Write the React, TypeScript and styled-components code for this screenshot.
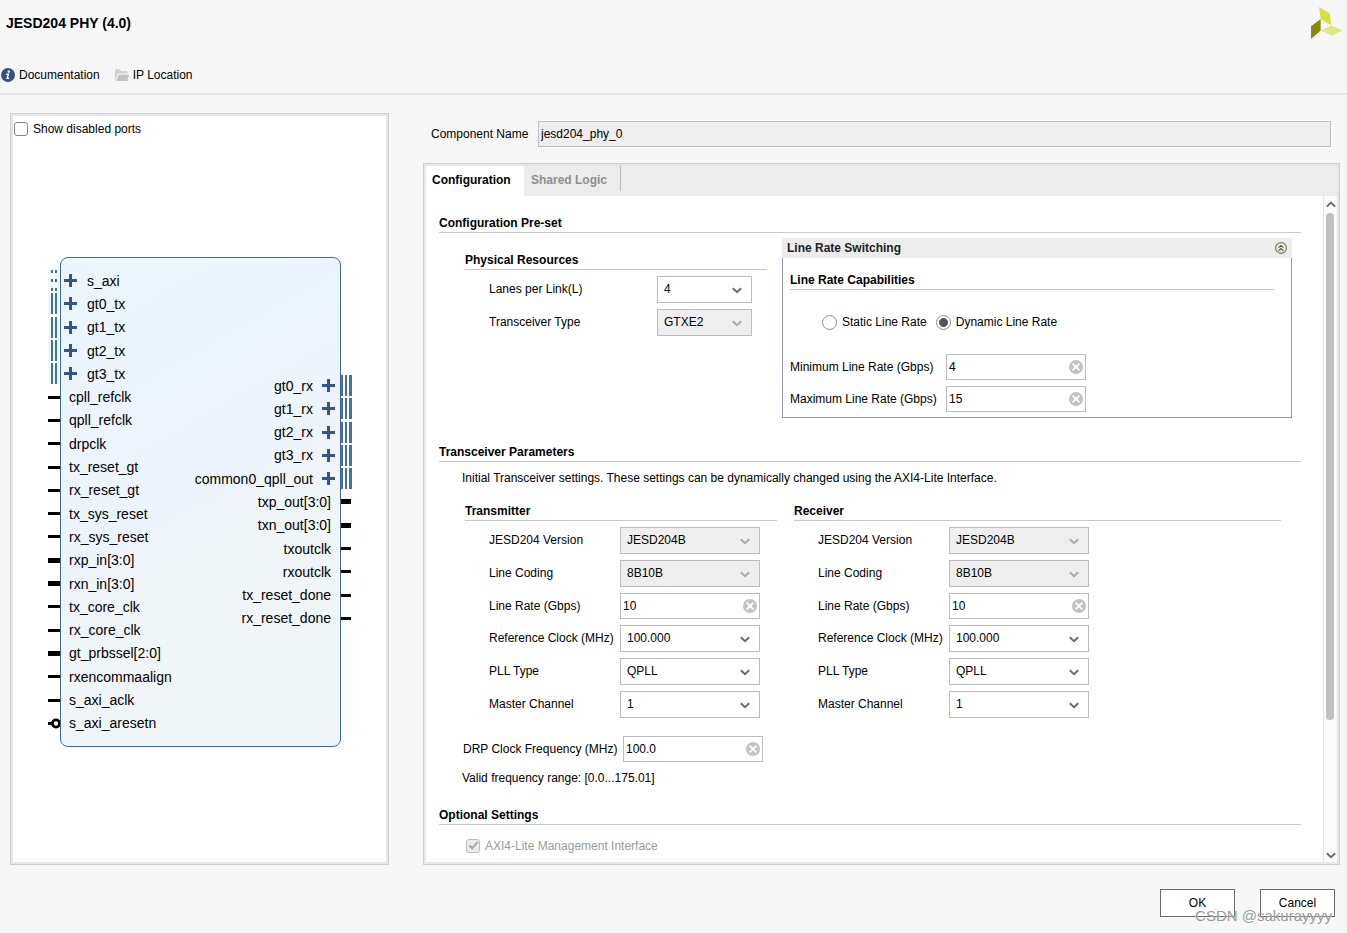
import React, { useId, useState } from "react";
import styled, { createGlobalStyle, css } from "styled-components";

const GlobalStyle = createGlobalStyle`
  *, *::before, *::after { box-sizing: border-box; }
  body {
    margin: 0;
    background: #f7f7f7;
    color: #000;
    font: 12px/16px "Liberation Sans", Arial, sans-serif;
  }
  button, input, select { font: inherit; color: inherit; margin: 0; }
`;

/* ---------- Page frame ---------- */

const Page = styled.div`
  display: flex;
  flex-direction: column;
  min-height: 100vh;
`;

const Header = styled.header`
  display: flex;
  justify-content: space-between;
  align-items: flex-start;
  padding: 7px 4px 10px 1px;
  border-bottom: 2px solid #e6e6e6;
`;

const Title = styled.h1`
  margin: 8px 0 36px 5px;
  font-size: 14px;
  line-height: 16px;
`;

const Links = styled.nav`
  display: flex;
  gap: 15px;
`;

const IconLink = styled.a`
  display: flex;
  align-items: center;
  gap: 4px;
  color: inherit;
  text-decoration: none;
`;

const Main = styled.main`
  flex: 1;
  display: flex;
  gap: 34px;
  padding: 18px 7px 0 10px;
`;

const framed = css`
  border: 1px solid #cfcfcf;
  box-shadow: inset 0 0 0 2px #e7e7e7;
  padding: 2px;
`;

const SymbolPanel = styled.section`
  ${framed}
  flex: 0 0 379px;
  display: flex;
  flex-direction: column;
  background: #fff;
`;

const SettingsColumn = styled.div`
  flex: 1;
  min-width: 0;
  display: flex;
  flex-direction: column;
`;

const Footer = styled.footer`
  position: relative;
  display: flex;
  justify-content: flex-end;
  gap: 25px;
  padding: 24px 12px 16px;
`;

const DialogButton = styled.button`
  width: 75px;
  height: 28px;
  padding: 0;
  border: 1px solid #6b6b6b;
  background: #fff;
`;

const Watermark = styled.span`
  position: absolute;
  right: 15px;
  bottom: 8px;
  font-size: 15px;
  line-height: 18px;
  color: rgba(125, 125, 125, 0.8);
  text-shadow: 0 0 1px #fff;
  pointer-events: none;
`;

/* ---------- Controls ---------- */

const CheckBox = styled.input.attrs({ type: "checkbox" })`
  appearance: none;
  flex: none;
  display: grid;
  justify-content: center;
  width: 14px;
  height: 14px;
  border: 1px solid #868686;
  border-radius: 3px;
  background: #fff;
  &:disabled {
    border-color: #bdbdbd;
    background: #ececec;
  }
  &:checked::after {
    content: "";
    width: 5px;
    height: 9px;
    border: solid #a6a6a6;
    border-width: 0 2px 2px 0;
    transform: rotate(42deg);
  }
`;

const CheckLabel = styled.label<{ $muted?: boolean }>`
  display: flex;
  align-items: center;
  gap: 5px;
  color: ${(p) => (p.$muted ? "#9a9a9a" : "inherit")};
`;

const Radio = styled.input.attrs({ type: "radio" })`
  appearance: none;
  flex: none;
  width: 15px;
  height: 15px;
  border: 1px solid #8c8c8c;
  border-radius: 50%;
  background: #fff;
  &:checked {
    background: radial-gradient(circle, #555 4px, #fff 5px);
  }
`;

const RadioLabel = styled.label`
  display: flex;
  align-items: center;
  gap: 5px;
`;

const SelectBox = styled.span<{ $narrow?: boolean }>`
  flex: none;
  display: grid;
  align-items: center;
  width: ${(p) => (p.$narrow ? 95 : 140)}px;
  > * { grid-area: 1 / 1; }
  > svg {
    justify-self: end;
    margin: 2px 10px 0 0;
    pointer-events: none;
  }
`;

const NativeSelect = styled.select`
  appearance: none;
  width: 100%;
  height: 27px;
  padding: 0 24px 1px 6px;
  border: 1px solid #bcbcbc;
  border-radius: 0;
  background: #fff;
  &:disabled {
    background: #eee;
    color: #000;
    opacity: 1;
  }
`;

const ClearableBox = styled.span`
  flex: none;
  display: flex;
  align-items: center;
  width: 140px;
  height: 26px;
  padding-right: 2px;
  border: 1px solid #bcbcbc;
  background: #fff;
`;

const BareInput = styled.input`
  flex: 1;
  min-width: 0;
  height: 24px;
  padding: 0 2px;
  border: 0;
  outline: 0;
  background: transparent;
`;

const IconButton = styled.button`
  display: flex;
  padding: 0;
  border: 0;
  background: none;
`;

const FieldRow = styled.div`
  display: flex;
  align-items: center;
`;

const FieldLabel = styled.label<{ $width: number }>`
  flex: none;
  width: ${(p) => p.$width}px;
  white-space: nowrap;
`;

const SelectLabel = styled(FieldLabel)`
  padding-bottom: 2px;
`;

/* ---------- Settings ---------- */

const NameRow = styled.div`
  display: flex;
  align-items: center;
  gap: 5px;
  padding: 8px 9px 16px 8px;
`;

const NameLabel = styled.label`
  flex: none;
  width: 102px;
`;

const NameInput = styled.input`
  flex: 1;
  min-width: 0;
  height: 26px;
  padding: 0 2px;
  border: 1px solid #bcbcbc;
  background: #eee;
  box-shadow: 0 0 0 1px #fdfdfd;
`;

const TabPanel = styled.section`
  ${framed}
  flex: 1;
  display: flex;
  flex-direction: column;
  background: #fff;
`;

const TabBar = styled.div`
  display: flex;
  height: 30px;
  background: #ececec;
`;

const Tab = styled.button<{ $active?: boolean }>`
  width: ${(p) => (p.$active ? 98 : 97)}px;
  height: ${(p) => (p.$active ? 30 : 25)}px;
  padding: ${(p) => (p.$active ? "0 0 2px 6px" : "3px 0 0 7px")};
  border: 0;
  border-right: ${(p) => (p.$active ? "0" : "1px solid #b8b8b8")};
  background: ${(p) => (p.$active ? "#fff" : "none")};
  color: ${(p) => (p.$active ? "#000" : "#8f8f8f")};
  font-weight: bold;
  text-align: left;
`;

const ScrollArea = styled.div`
  flex: 1;
  display: flex;
`;

const Content = styled.div`
  flex: 1;
  min-width: 0;
  padding: 20px 22px 8px 13px;
`;

const ScrollBar = styled.div`
  flex: none;
  width: 14px;
  display: flex;
  flex-direction: column;
  padding: 5px 0 3px;
  border-left: 1px solid #e4e4e4;
  background: #fbfbfb;
`;

const ScrollArrow = styled(IconButton)`
  padding-left: 2px;
`;

const ScrollTrack = styled.div`
  flex: 1;
  margin: 5px 3px 5px 2px;
`;

const ScrollThumb = styled.div`
  width: 8px;
  height: 80%;
  border-radius: 4px;
  background: #c0c0c0;
`;

const Heading = styled.h2`
  margin: 0;
  padding-bottom: 2px;
  border-bottom: 1px solid #c9c9c9;
  font-size: 12px;
  line-height: 14px;
`;

const PresetGrid = styled.div`
  display: grid;
  grid-template-columns: 302px 1fr;
  gap: 15px;
  padding: 5px 9px 27px 26px;
`;

const Resources = styled.div`
  padding-top: 15px;
`;

const FieldStack = styled.div`
  display: flex;
  flex-direction: column;
  gap: 6px;
  padding: 6px 0 0 24px;
`;

const SwitchBox = styled.div`
  display: flex;
  flex-direction: column;
`;

const SwitchHeader = styled.div`
  display: flex;
  justify-content: space-between;
  align-items: center;
  height: 20px;
  padding: 0 5px;
  background: #ececec;
  color: #222;
  font-weight: bold;
`;

const SwitchBody = styled.div`
  flex: 1;
  padding: 15px 17px 5px 7px;
  border: 1px solid #8f97b3;
  border-top: 0;
`;

const RadioRow = styled.div`
  display: flex;
  gap: 9px;
  padding: 24px 0 24px 32px;
`;

const RateStack = styled.div`
  display: flex;
  flex-direction: column;
  gap: 6px;
`;

const Note = styled.p`
  margin: 8px 0 0 23px;
`;

const LinkGrid = styled.div`
  display: grid;
  grid-template-columns: 312px 1fr;
  gap: 17px;
  padding: 18px 20px 18px 26px;
`;

const DrpRow = styled(FieldRow)`
  padding-left: 24px;
`;

const OptionalHeading = styled(Heading)`
  margin-top: 22px;
`;

const OptionRow = styled.div`
  padding: 13px 0 0 27px;
`;

/* ---------- Block symbol ---------- */

const ShowPorts = styled.div`
  padding: 5px 1px;
`;

const SymbolCanvas = styled.div`
  flex: 1;
  display: flex;
  justify-content: center;
  align-items: center;
  padding-left: 2px;
`;

const SymbolBlock = styled.div`
  display: flex;
  height: 490px;
  font-size: 14px;
`;

const Body = styled.div`
  display: flex;
  justify-content: space-between;
  width: 281px;
  padding: 11px 0;
  border: 1px solid #4067a6;
  border-radius: 8px;
  background: linear-gradient(150deg, #eaf6fe, #eef4fd 45%, #f0f5f7 60%, #f0f5f8);
`;

const PortColumn = styled.div<{ $pins?: boolean }>`
  display: flex;
  flex-direction: column;
  justify-content: center;
  padding: ${(p) => (p.$pins ? "12px 0" : "0")};
  width: ${(p) => (p.$pins ? "12px" : "auto")};
`;

const PortRow = styled.div<{ $end?: boolean; $bus?: boolean }>`
  display: flex;
  align-items: center;
  justify-content: ${(p) => (p.$end ? "flex-end" : "flex-start")};
  gap: ${(p) => (p.$end ? 9 : 10)}px;
  height: 5%;
  padding: ${(p) => (p.$bus ? (p.$end ? "0 5px 0 0" : "0 0 0 3px") : p.$end ? "0 9px 0 0" : "0 0 0 8px")};
`;

const PinRow = styled.div`
  display: flex;
  align-items: center;
  height: 5%;
`;

const WirePin = styled.span<{ $wide?: boolean; $right?: boolean }>`
  width: ${(p) => (p.$right ? 10 : 12)}px;
  height: ${(p) => (p.$wide ? 5 : 3)}px;
  background: #000;
`;

const InterfacePin = styled.span<{ $right?: boolean; $dashed?: boolean }>`
  display: flex;
  gap: 2px;
  width: 12px;
  height: 21px;
  padding-left: ${(p) => (p.$right ? 0 : 3)}px;
  background: ${(p) => (p.$right ? "#fff" : "#edf7fe")};
  > i {
    width: 2px;
    background: ${(p) =>
      p.$dashed
        ? "repeating-linear-gradient(#44719f 0 3px, transparent 3px 9px)"
        : "#44719f"};
  }
  > i:nth-child(3) { width: 3px; }
`;

/* ---------- Icons ---------- */

const Chevron = ({ muted, up }: { muted?: boolean; up?: boolean }) => (
  <svg width="10" height="7" viewBox="0 0 10 7" fill="none" aria-hidden="true">
    <path
      d={up ? "M0.8 5.6L5 1.6L9.2 5.6" : "M0.8 1.2L5 5.2L9.2 1.2"}
      stroke={muted ? "#a9a9a9" : "#6c6c6c"}
      strokeWidth="2"
    />
  </svg>
);

const ClearIcon = () => (
  <svg width="14" height="14" viewBox="0 0 14 14" aria-hidden="true">
    <circle cx="7" cy="7" r="7" fill="#c2c2c2" />
    <path d="M3.6 3.6L10.4 10.4M10.4 3.6L3.6 10.4" stroke="#fff" strokeWidth="1.8" />
  </svg>
);

const InfoIcon = () => (
  <svg width="14" height="14" viewBox="0 0 14 14" aria-hidden="true">
    <circle cx="7" cy="7" r="7" fill="#34518b" />
    <circle cx="7.8" cy="3.6" r="1.2" fill="#fff" />
    <path d="M5.2 6.2H7.4L6.2 10.4H8.2" fill="none" stroke="#fff" strokeWidth="1.4" />
  </svg>
);

const FolderIcon = () => (
  <svg width="14" height="12" viewBox="0 0 14 12" aria-hidden="true">
    <path d="M0 11V1L1 0H4.5L6 2H11.5L12.5 3V5H3.2L1 11Z" fill="#d3d3d3" />
    <path d="M3.8 5.4H14L12.6 12H1.2Z" fill="#c2c2c2" />
    <path d="M1 11.4L3.4 5H13" fill="none" stroke="#f7f7f7" strokeWidth="0.8" />
  </svg>
);

const PlusIcon = () => (
  <svg width="13" height="13" viewBox="0 0 13 13" aria-hidden="true">
    <path d="M5 0H8V5H13V8H8V13H5V8H0V5H5Z" fill="#35548f" />
  </svg>
);

const CollapseIcon = () => (
  <svg width="12" height="12" viewBox="0 0 12 12" fill="none" aria-hidden="true">
    <circle cx="6" cy="6" r="5.4" fill="#eeeddc" stroke="#7c7b68" strokeWidth="1.2" />
    <path d="M3.6 5.6L6 3.4L8.4 5.6M3.6 8.8L6 6.6L8.4 8.8" stroke="#55544a" strokeWidth="1.1" />
  </svg>
);

const InvertedPin = () => (
  <svg width="12" height="11" viewBox="0 0 12 11" aria-hidden="true">
    <path d="M0 4H4V7H0Z" fill="#000" />
    <circle cx="8" cy="5.5" r="3.6" fill="#fff" stroke="#000" strokeWidth="2.8" />
  </svg>
);

const Logo = () => (
  <svg width="32" height="32" viewBox="0 0 32 32" role="img" aria-label="Vendor logo">
    <path d="M8 0L18.7 6.3L20 18L9.7 12Z" fill="#d5e23a" />
    <path d="M0 19.3L9.7 12V23.5L0 32Z" fill="#898a0d" />
    <path d="M9.7 23.4L20.3 18.4L31.7 23.4L21 28.4Z" fill="#e1e97b" />
  </svg>
);

/* ---------- Composed parts ---------- */

interface SelectFieldProps {
  label: string;
  value: string;
  labelWidth?: number;
  disabled?: boolean;
  narrow?: boolean;
}

function SelectField({ label, value, labelWidth = 131, disabled, narrow }: SelectFieldProps) {
  const id = useId();
  return (
    <FieldRow>
      <SelectLabel htmlFor={id} $width={labelWidth}>{label}</SelectLabel>
      <SelectBox $narrow={narrow}>
        <NativeSelect id={id} defaultValue={value} disabled={disabled}>
          <option>{value}</option>
        </NativeSelect>
        <Chevron muted={disabled} />
      </SelectBox>
    </FieldRow>
  );
}

interface NumberFieldProps {
  label: string;
  initial: string;
  labelWidth?: number;
  row?: React.ElementType;
}

function NumberField({ label, initial, labelWidth = 131, row: Row = FieldRow }: NumberFieldProps) {
  const id = useId();
  const [value, setValue] = useState(initial);
  return (
    <Row>
      <FieldLabel htmlFor={id} $width={labelWidth}>{label}</FieldLabel>
      <ClearableBox>
        <BareInput id={id} value={value} onChange={(e) => setValue(e.target.value)} />
        <IconButton type="button" aria-label={`Clear ${label}`} onClick={() => setValue("")}>
          <ClearIcon />
        </IconButton>
      </ClearableBox>
    </Row>
  );
}

function LinkSettings({ title }: { title: string }) {
  return (
    <div>
      <Heading as="h3">{title}</Heading>
      <FieldStack>
        <SelectField label="JESD204 Version" value="JESD204B" disabled />
        <SelectField label="Line Coding" value="8B10B" disabled />
        <NumberField label="Line Rate (Gbps)" initial="10" />
        <SelectField label="Reference Clock (MHz)" value="100.000" />
        <SelectField label="PLL Type" value="QPLL" />
        <SelectField label="Master Channel" value="1" />
      </FieldStack>
    </div>
  );
}

type PinKind = "wire" | "bus" | "interface" | "dashed" | "inverted";
type Port = [name: string, kind: PinKind];

const inputs: Port[] = [
  ["s_axi", "dashed"],
  ["gt0_tx", "interface"],
  ["gt1_tx", "interface"],
  ["gt2_tx", "interface"],
  ["gt3_tx", "interface"],
  ["cpll_refclk", "wire"],
  ["qpll_refclk", "wire"],
  ["drpclk", "wire"],
  ["tx_reset_gt", "wire"],
  ["rx_reset_gt", "wire"],
  ["tx_sys_reset", "wire"],
  ["rx_sys_reset", "wire"],
  ["rxp_in[3:0]", "bus"],
  ["rxn_in[3:0]", "bus"],
  ["tx_core_clk", "wire"],
  ["rx_core_clk", "wire"],
  ["gt_prbssel[2:0]", "bus"],
  ["rxencommaalign", "wire"],
  ["s_axi_aclk", "wire"],
  ["s_axi_aresetn", "inverted"],
];

const outputs: Port[] = [
  ["gt0_rx", "interface"],
  ["gt1_rx", "interface"],
  ["gt2_rx", "interface"],
  ["gt3_rx", "interface"],
  ["common0_qpll_out", "interface"],
  ["txp_out[3:0]", "bus"],
  ["txn_out[3:0]", "bus"],
  ["txoutclk", "wire"],
  ["rxoutclk", "wire"],
  ["tx_reset_done", "wire"],
  ["rx_reset_done", "wire"],
];

const isInterface = (kind: PinKind) => kind === "interface" || kind === "dashed";

function Pins({ ports, right }: { ports: Port[]; right?: boolean }) {
  return (
    <PortColumn $pins>
      {ports.map(([name, kind]) => (
        <PinRow key={name}>
          {isInterface(kind) ? (
            <InterfacePin $right={right} $dashed={kind === "dashed"}>
              <i />
              <i />
              {right && <i />}
            </InterfacePin>
          ) : kind === "inverted" ? (
            <InvertedPin />
          ) : (
            <WirePin $wide={kind === "bus"} $right={right} />
          )}
        </PinRow>
      ))}
    </PortColumn>
  );
}

function PortNames({ ports, right }: { ports: Port[]; right?: boolean }) {
  return (
    <PortColumn>
      {ports.map(([name, kind]) => (
        <PortRow key={name} $end={right} $bus={isInterface(kind)}>
          {!right && isInterface(kind) && <PlusIcon />}
          <span>{name}</span>
          {right && isInterface(kind) && <PlusIcon />}
        </PortRow>
      ))}
    </PortColumn>
  );
}

export default function App() {
  const [mode, setMode] = useState("dynamic");
  return (
    <Page>
      <GlobalStyle />
      <Header>
        <div>
          <Title>JESD204 PHY (4.0)</Title>
          <Links>
            <IconLink href="#documentation"><InfoIcon />Documentation</IconLink>
            <IconLink href="#location"><FolderIcon />IP Location</IconLink>
          </Links>
        </div>
        <Logo />
      </Header>

      <Main>
        <SymbolPanel>
          <ShowPorts>
            <CheckLabel><CheckBox />Show disabled ports</CheckLabel>
          </ShowPorts>
          <SymbolCanvas>
            <SymbolBlock>
              <Pins ports={inputs} />
              <Body>
                <PortNames ports={inputs} />
                <PortNames ports={outputs} right />
              </Body>
              <Pins ports={outputs} right />
            </SymbolBlock>
          </SymbolCanvas>
        </SymbolPanel>

        <SettingsColumn>
          <NameRow>
            <NameLabel htmlFor="component-name">Component Name</NameLabel>
            <NameInput id="component-name" defaultValue="jesd204_phy_0" readOnly />
          </NameRow>
          <TabPanel>
            <TabBar role="tablist">
              <Tab type="button" role="tab" aria-selected $active>Configuration</Tab>
              <Tab type="button" role="tab" aria-selected={false}>Shared Logic</Tab>
            </TabBar>
            <ScrollArea>
              <Content>
                <Heading>Configuration Pre-set</Heading>
                <PresetGrid>
                  <Resources>
                    <Heading as="h3">Physical Resources</Heading>
                    <FieldStack>
                      <SelectField label="Lanes per Link(L)" value="4" labelWidth={168} narrow />
                      <SelectField label="Transceiver Type" value="GTXE2" labelWidth={168} narrow disabled />
                    </FieldStack>
                  </Resources>
                  <SwitchBox>
                    <SwitchHeader>
                      Line Rate Switching
                      <IconButton type="button" aria-label="Collapse"><CollapseIcon /></IconButton>
                    </SwitchHeader>
                    <SwitchBody>
                      <Heading as="h3">Line Rate Capabilities</Heading>
                      <RadioRow>
                        <RadioLabel>
                          <Radio name="rate" checked={mode === "static"} onChange={() => setMode("static")} />
                          Static Line Rate
                        </RadioLabel>
                        <RadioLabel>
                          <Radio name="rate" checked={mode === "dynamic"} onChange={() => setMode("dynamic")} />
                          Dynamic Line Rate
                        </RadioLabel>
                      </RadioRow>
                      <RateStack>
                        <NumberField label="Minimum Line Rate (Gbps)" initial="4" labelWidth={156} />
                        <NumberField label="Maximum Line Rate (Gbps)" initial="15" labelWidth={156} />
                      </RateStack>
                    </SwitchBody>
                  </SwitchBox>
                </PresetGrid>

                <Heading>Transceiver Parameters</Heading>
                <Note>
                  Initial Transceiver settings. These settings can be dynamically changed using the AXI4-Lite Interface.
                </Note>
                <LinkGrid>
                  <LinkSettings title="Transmitter" />
                  <LinkSettings title="Receiver" />
                </LinkGrid>
                <NumberField label="DRP Clock Frequency (MHz)" initial="100.0" labelWidth={160} row={DrpRow} />
                <Note>Valid frequency range: [0.0...175.01]</Note>

                <OptionalHeading>Optional Settings</OptionalHeading>
                <OptionRow>
                  <CheckLabel $muted>
                    <CheckBox defaultChecked disabled />
                    AXI4-Lite Management Interface
                  </CheckLabel>
                </OptionRow>
              </Content>
              <ScrollBar>
                <ScrollArrow type="button" aria-label="Scroll up"><Chevron up /></ScrollArrow>
                <ScrollTrack><ScrollThumb /></ScrollTrack>
                <ScrollArrow type="button" aria-label="Scroll down"><Chevron /></ScrollArrow>
              </ScrollBar>
            </ScrollArea>
          </TabPanel>
        </SettingsColumn>
      </Main>

      <Footer>
        <DialogButton type="button">OK</DialogButton>
        <DialogButton type="button">Cancel</DialogButton>
        <Watermark>CSDN @sakurayyyy</Watermark>
      </Footer>
    </Page>
  );
}
